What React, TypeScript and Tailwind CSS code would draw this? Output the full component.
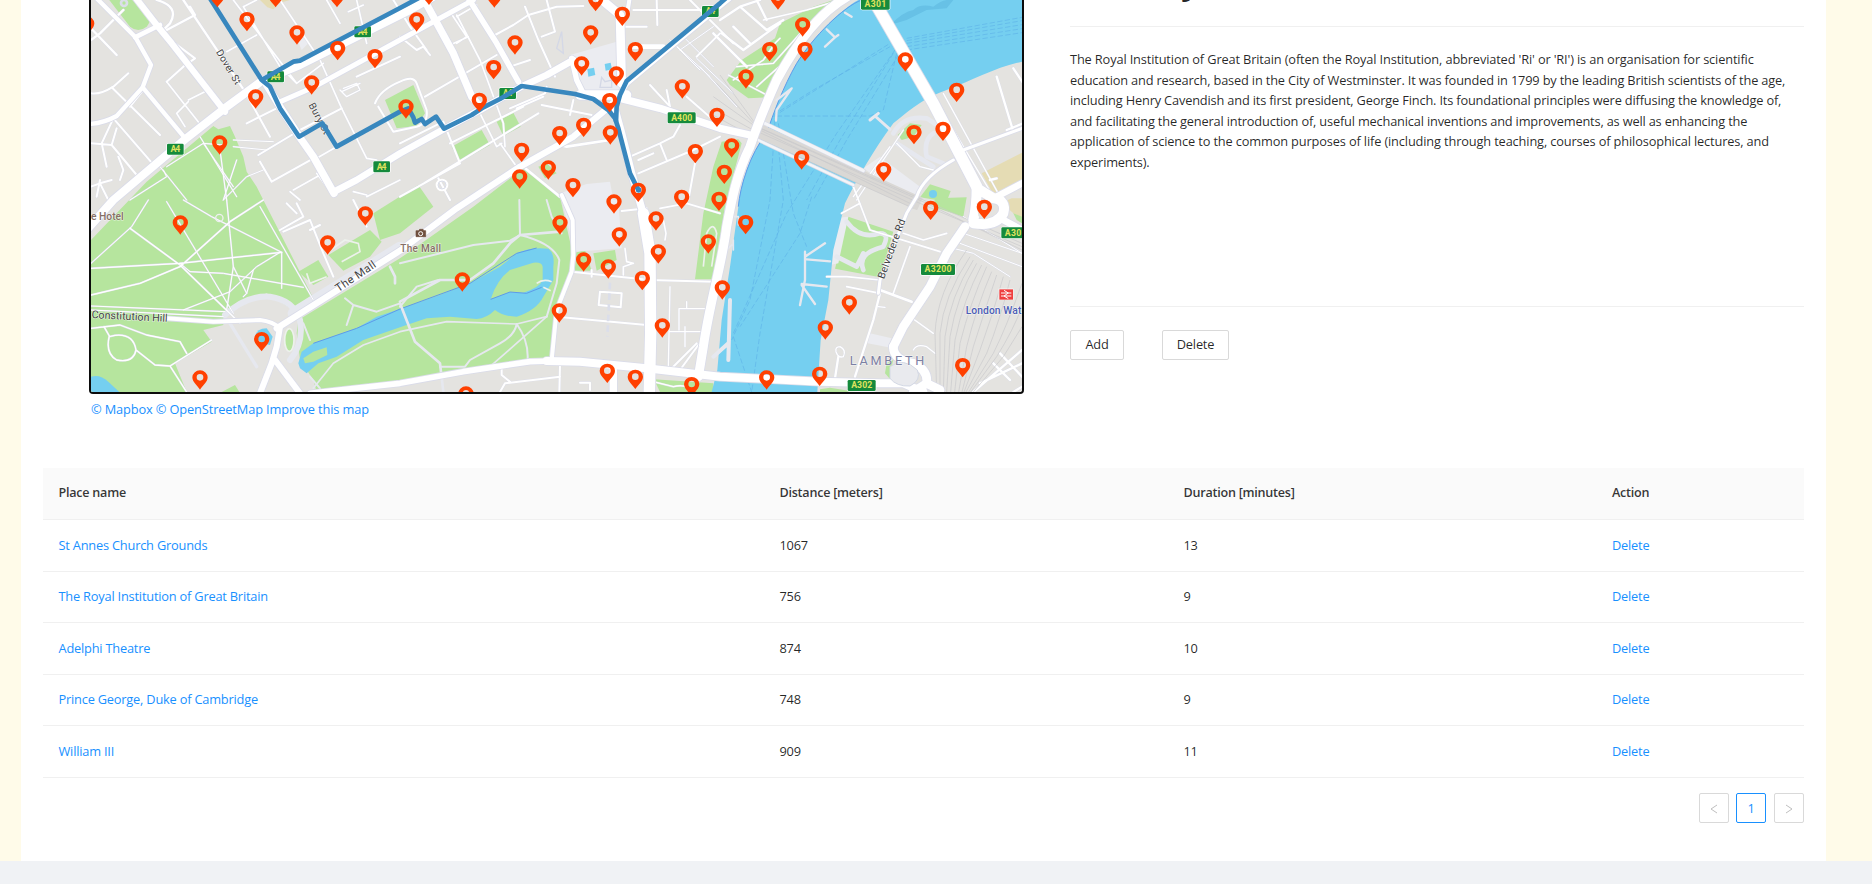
import React from "react";

type Road = [string, number];
type Pt = [number, number];

const LINK = "text-[#1890ff]";

/* ---------- map data: one unit is a third of a pixel ---------- */

const parks: string[] = [
  "M33 720L200 545L400 378L415 388L450 378L465 410L490 470L500 515L530 560L550 600L700 895L640 930L560 880L430 935L430 975L370 990L395 1025L285 1090L320 1176L33 1176Z",
  "M655 960L960 775L1180 620L1330 505L1440 590L1480 770L1475 815L1425 930L1415 1075L1200 1100L960 1140L710 1176L700 1140L660 1080L650 1000Z",
  "M80 -10L150 80Q175 100 200 80Q220 55 205 30L175 -10Z",
  "M915 300L1000 255L1035 340L1010 378L950 385Z",
  "M1115 440L1205 390L1230 435L1140 485Z",
  "M1250 365L1300 338L1322 380L1270 408Z",
  "M880 640L1015 555L1060 620L960 700L900 720Z",
  "M1375 500L1400 490L1430 520L1395 535Z",
  "M655 815L715 780L745 830L700 855Z",
  "M745 765L870 690L905 725L870 770L790 812Z",
  "M1485 758L1515 750L1535 812L1485 812Z",
  "M1540 760L1605 750L1610 780L1550 812Z",
  "M1925 425L1975 418L1985 430L1935 620L1900 838L1845 838L1870 640L1900 500Z",
  "M2290 -10L2200 20L2100 70L2085 115L1985 180L1940 240L1950 255L2005 295L2060 292L2080 245L2110 190L2170 110L2220 60L2300 -10Z",
  "M2453 405L2490 370L2525 375L2500 410L2465 420Z",
  "M2520 592L2550 553L2612 573L2600 605Z",
  "M2565 595L2660 592L2650 650L2560 620Z",
  "M2305 650L2440 695L2400 832L2265 806Z",
  "M2220 1168L2250 1163L2330 1176L2220 1176Z",
  "M425 1176L465 1155L478 1176Z",
  "M1722 1138L1900 1150L1900 1176L1740 1176Z",
  "M2420 1090L2440 1080L2430 1120L2450 1160L2415 1120Z",
  "M2800 640L2826 630L2826 670L2810 660Z",
];

const tans: string[] = [
  "M540 0L562 22L580 28L600 8L630 0Z",
  "M2705 520L2826 458L2826 545L2740 582Z",
  "M2765 608L2795 595L2826 595L2826 650L2800 640Z",
];

const plazas: string[] = [
  "M1470 165L1610 125L1625 200L1620 270L1505 275L1480 190Z",
  "M1440 580L1520 552L1590 545L1600 600L1615 600L1625 745L1485 755L1450 620Z",
  "M2350 505L2400 470L2520 560L2500 592L2430 560Z",
  "M2370 1000L2435 1015L2425 1042L2363 1030Z",
  "M2260 655L2305 650L2275 790L2250 795Z",
  "M650 115L675 108L685 130L665 150Z",
];

const waters: string[] = [
  "M2345 -5C2290 20 2200 110 2150 190C2110 260 2080 340 2060 400C2010 460 1980 560 1975 620L1950 800L1925 960L1912 1110L1895 1176L2212 1176L2222 1020L2245 900L2260 750L2295 610C2330 540 2380 450 2440 370C2500 320 2540 290 2600 270C2680 240 2750 200 2826 185L2826 -5Z",
  "M655 1090L665 1055L700 1030L830 985L890 950L960 927L1080 885L1170 850L1260 800L1310 760Q1350 740 1405 746Q1425 760 1420 800L1420 840L1390 890Q1370 930 1310 950Q1270 950 1245 930Q1220 955 1190 957L1110 950L1040 955L960 982L850 1020L770 1070L715 1090L680 1120L660 1105Z",
  "M33 1130Q60 1122 85 1145L118 1176L33 1176Z",
  "M525 1010Q530 985 560 985L578 1010L570 1035L545 1030Z",
  "M1522 207L1542 203L1546 225L1525 230Z",
  "M1574 192L1592 188L1596 208L1577 212Z",
];

const islands: string[] = [
  "M1232 898Q1250 840 1290 810L1360 788Q1385 785 1388 800L1388 840Q1380 862 1330 878L1290 876Z",
  "M670 1075L700 1055L740 1042L742 1065L700 1085L675 1090Z",
];

const lavender: Road[] = [
  ["M435 945Q500 885 570 890Q640 900 660 960Q672 1030 630 1080", 18],
  ["M450 970L530 1100", 10],
  ["M640 940L960 742", 34],
  ["M960 905L1080 840L1170 840L1240 790L1290 730L1320 705L1440 695", 8],
  ["M960 790L1180 735L1290 722L1320 705L1318 600", 6],
  ["M1320 705Q1420 730 1438 780L1430 850L1400 950", 6],
  ["M960 910L1005 1025L1080 1090L1090 1176", 8],
  ["M700 1165L760 1090L850 1035L960 995L1100 965L1310 972L1400 950", 5],
  ["M1310 972Q1345 1020 1343 1075M1310 972Q1305 1005 1260 1030L1170 1080L1155 1100L1080 1100", 6],
  ["M1400 950L1230 1100", 5],
  ["M795 895L820 915L890 935L960 910M820 915L805 960L800 975", 6],
  ["M1075 840L1010 860L960 920", 6],
  ["M1400 600L1415 650L1445 700", 6],
  ["M930 800L945 830L945 850", 8],
  ["M2300 665Q2340 720 2400 700Q2430 700 2410 740Q2330 760 2350 810M2270 770L2330 800L2350 760", 14],
  ["M690 1130L720 1165", 6],
  ["M670 970L690 1020", 6],
  ["M2440 400Q2470 345 2540 355Q2580 380 2600 400M2560 400Q2530 420 2540 470L2590 490M2450 430L2560 500", 14],
];

const minor: Road[] = [
  ["M33 85L110 165M33 120L60 100L130 30M230 0Q300 20 270 70L245 95", 7],
  ["M260 90L345 45M310 0L495 275M345 45L330 20", 7],
  ["M33 280Q60 285 100 260L145 220M95 262L240 405M150 320L190 270M260 245L310 200L345 175L285 130", 6],
  ["M260 245L370 385M325 300L385 270M290 340L325 305M290 340L315 380", 5],
  ["M100 355L230 505M100 355L65 430L80 500M33 430L95 435L170 525M95 435L110 385M60 540L50 590", 6],
  ["M33 560L60 550L95 540M60 550L85 600M115 470L130 510L120 540", 6],
  ["M460 0L650 250M440 155L530 105M490 20L600 200L650 250L730 190M490 20L530 0", 5],
  ["M495 275L570 410M500 370L600 320M535 465L660 390L785 325M540 485L575 545L710 470", 6],
  ["M740 0L780 70M830 0L860 130M805 35L850 15M600 0L720 180L785 325L860 475L890 480", 5],
  ["M785 275L840 250M780 270L800 290L840 270L830 250L790 265", 4],
  ["M630 575L660 600M640 570L720 525M820 575L860 585M710 475L770 440M860 590L960 540M710 520L740 560", 5],
  ["M885 310Q900 270 960 245Q1000 225 1010 250L1040 330Q1045 370 1010 380L940 395L895 320", 6],
  ["M830 230L960 170M940 0L990 80L1040 150M960 110L1010 150L1030 140L1050 165M1035 290L1250 165", 6],
  ["M1130 50L1190 15M1110 35L1160 110L1130 130M1110 135L1165 110M1130 45L1200 180L1270 370L1275 440M1170 280L1250 440L1265 430", 5],
  ["M1245 105L1300 75L1345 45L1430 20L1510 18M1335 20L1375 120L1425 230M1400 0L1425 95L1385 110", 6],
  ["M1290 325L1395 280L1400 260M1310 325L1390 290M1290 200L1350 180M1385 315L1535 345M1480 300L1470 345", 6],
  ["M960 430L1090 365L1140 490M1035 548L1375 340M1110 430L1330 320M1075 535L1110 600M1140 490L960 590", 6],
  ["M1260 430L1310 500", 5],
  ["M1330 500L1440 590M1440 435L1460 440L1590 420", 8],
  ["M1730 0L1732 75M1660 30L1880 30M1620 80L1700 80M1830 0L1960 130M1850 170L1920 100", 6],
  ["M1660 140L1750 140", 14],
  ["M1650 470L1740 430L1780 410L1800 375M1740 430L1760 480M1675 520L1840 450L1920 410M1675 480L1720 460", 6],
  ["M1845 490L1825 600M1820 290L1900 360M1760 270L1770 320M1710 255L1770 320", 6],
  ["M1790 140L1860 210M1770 120L1890 230M1850 175L1960 280M1810 110L1900 200M1860 200L1970 320M1800 150L1900 80", 3],
  ["M1920 60L1980 20L2040 0M1980 20L2060 90L2110 60M1900 100L2000 200M1925 100L1990 150L2100 70M2010 130L1960 80M2030 0L2060 60", 7],
  ["M1960 240L2050 180L2085 130L2100 115M1970 200L2080 190L2170 90M1945 225L2060 285M2030 260L2120 180M2050 60L2180 30L2280 0", 4],
  ["M1485 755L1480 815M1475 815L1710 840L1900 845M1430 950L1700 975M1625 633L1700 625M1560 875L1625 880L1622 922L1556 915L1560 875M1535 810L1535 830", 6],
  ["M1740 625L1820 610L1920 640M1750 660L1758 700L1755 720M1635 745L1640 785L1660 790M1630 825L1630 800L1660 790", 5],
  ["M1797 990L1797 926L1875 926M1820 905L1820 925M1770 995L1870 995M1770 860L1765 1100M1815 980L1815 1040", 4],
  ["M1770 1110L1850 1030M1800 1110L1855 1035M1500 1148L1530 1148L1530 1170M1440 1095L1438 1176M1260 1176L1275 1150L1440 1130M1265 1100L1265 1125L1290 1145", 6],
  ["M33 805L300 790L605 757M33 885L180 850L300 800L450 665L550 600M150 685L300 795L480 970", 4],
  ["M260 605L460 940M310 600L395 650L605 757M440 600L450 700L460 800L440 930M605 757L605 865M300 790L330 815L430 820L670 862M460 800L500 880M33 790L155 680L205 600", 3],
  ["M33 918L435 935M33 930L430 950M310 930L450 875L530 800L600 757M540 620L700 900M520 810L500 880L490 890", 3],
  ["M33 985L120 975L200 1005L300 1025L320 1060M72 980L88 1008Q75 1060 110 1080Q160 1090 168 1050Q160 1000 105 1006L88 1010M168 1050L225 1095L270 1098L395 1020M270 1098L320 1176", 4],
  ["M260 500L370 430L430 435M360 410L470 590M420 450L440 600M370 430L460 560M470 480L430 600M240 500L320 600M150 600L260 530L250 510M430 600L500 530L550 510", 3],
  ["M460 420L580 425M460 440L560 450", 3],
  ["M600 690L670 650L650 610M610 695L690 660L730 760L760 830M690 690L720 675M620 610L650 640M820 600L860 680", 6],
  ["M2285 640L2340 610M2320 560L2370 690L2500 730L2580 755M2240 830L2300 830L2400 840M2300 860L2400 880M2490 740L2440 880M2470 700L2530 720L2600 700", 5],
  ["M2400 880L2380 960L2325 1130M2265 1135L2275 1070", 7],
  ["M2280 1040Q2265 1040 2268 1055Q2275 1075 2290 1070Q2300 1050 2280 1040M2490 950L2560 1000M2500 1050Q2510 1030 2540 1040L2565 1060M2395 920L2415 922", 4],
  ["M2400 870L2495 905", 8],
  ["M2750 230L2800 395M2830 370L2780 390M2800 205L2830 250M2730 540L2750 535", 7],
  ["M2560 285L2650 440L2740 590M2590 280L2760 590M2450 430L2520 500L2560 510M2470 390L2330 600M2430 440L2320 590", 4],
  ["M2680 1176L2826 1050M2700 1150L2826 1090M2760 1060L2826 1130M2740 1090L2790 1140M2800 1176L2826 1160", 7],
  ["M2650 700L2826 760M2640 730L2826 800M2650 650L2826 760M2600 740L2680 760L2790 830", 3],
  ["M1700 1140L1780 1160Q1820 1150 1840 1176", 4],
];

const major: Road[] = [
  ["M40 -15L165 110L213 195L188 262L110 348Q70 370 25 372", 13],
  ["M165 112L240 75", 14],
  ["M168 -5L230 75L275 130L435 335", 19],
  ["M188 262L318 418", 13],
  ["M20 690L100 600L315 418L430 328L545 243", 24],
  ["M545 243L660 195L800 125L980 35L1060 -10", 24],
  ["M590 310L700 262L960 120L1180 0", 15],
  ["M560 255L600 320L665 420L700 470L762 580", 22],
  ["M762 575L830 540L960 460L1090 388L1200 330L1320 262L1400 225L1480 180", 20],
  ["M1030 -5L1120 160L1175 290L1200 320", 22],
  ["M1165 -5L1250 130L1315 245", 17],
  ["M1475 175L1490 240L1510 280", 16],
  ["M1500 285L1640 285", 28],
  ["M1560 -5L1620 45L1625 250", 26],
  ["M1648 0L1640 50", 12],
  ["M1610 300L1640 250L1760 150L1960 -15", 16],
  ["M1600 290L1740 325L1920 385L2010 405", 22],
  ["M590 985L960 752L1130 625L1320 500L1480 410L1600 310", 19],
  ["M1600 310L1625 400L1655 520L1695 660L1708 740L1705 1176", 22],
  ["M1690 640L1710 760L1712 1000L1708 1176", 34],
  ["M260 955L400 965L540 960Q580 965 600 985", 12],
  ["M600 980L590 1040L575 1090L540 1180M585 1080L660 1180", 18],
  ["M1445 585L1478 660L1480 765L1475 815L1430 930L1415 1080", 12],
  ["M690 1180L960 1150L1150 1115L1350 1085L1420 1083", 17],
  ["M1400 1083L1500 1085L1700 1105L1920 1130L2220 1145L2400 1150L2470 1150L2530 1176", 24],
  ["M1600 1100L1600 1176", 22],
  ["M2320 -20C2220 30 2150 130 2090 240C2050 330 2030 380 2010 440C1970 520 1955 600 1940 680C1925 800 1890 900 1870 1040L1855 1130", 27],
  ["M2392 20L2560 310L2690 560", 34],
  ["M2690 560Q2690 620 2680 660M2700 570L2740 595Q2780 600 2770 640Q2750 680 2680 670", 30],
  ["M2740 595L2826 550M2770 660L2826 690", 20],
  ["M2650 450L2826 385M2620 480Q2530 530 2510 590L2480 640L2400 840L2395 880", 9],
  ["M2655 680L2600 760L2550 860L2470 980L2440 1040", 26],
  ["M2440 1040Q2440 1080 2500 1090Q2545 1110 2540 1150L2500 1176M2540 1150L2580 1170", 26],
];

const bridges: Road[] = [
  ["M2050 368L2350 512", 9],
  ["M2030 418L2320 555", 7],
];

const rails: string[] = [
  "M1900 325L2010 385L2520 610L2826 740",
  "M1900 290L2020 375L2530 600L2826 730",
  "M1910 250L2030 380L2540 610L2826 750",
  "M1920 225L2040 390L2500 615",
  "M1890 340L2000 400L2500 625",
  "M2570 1176L2565 1000Q2570 880 2660 750",
  "M2580 1176L2580 1000Q2590 890 2670 770",
  "M2590 1176L2595 1010Q2610 890 2680 780",
  "M2600 1176L2610 1010Q2630 890 2690 790",
  "M2612 1176L2625 1020Q2650 900 2705 795",
  "M2624 1176L2640 1030Q2670 910 2720 800",
  "M2636 1176L2660 1040Q2690 920 2735 815",
  "M2646 1176L2680 1040Q2715 930 2750 825",
  "M2652 1176L2700 1050Q2740 940 2770 830",
  "M2658 1176L2720 1060Q2760 960 2790 840",
  "M2666 1176L2740 1060Q2780 980 2826 850",
  "M2672 1176L2750 1070Q2800 990 2826 920",
  "M2680 1176L2770 1070L2826 980",
];

const ferries = [
  "M2080 345L2200 270L2430 140",
  "M2090 348L2370 348L2410 330L2450 160",
  "M2080 350L2430 130",
  "M2440 160L2280 420L2180 600",
  "M2455 165L2300 420L2200 600",
  "M2445 150L2270 400L2120 640L1960 1000",
  "M2480 115L2826 52M2480 122L2826 62M2480 130L2826 74M2480 140L2826 86M2480 150L2826 98",
  "M2085 360L2070 600L2010 900L1955 1020",
  "M2095 370L2140 640L2180 740",
  "M2090 380L2110 600L2040 1000L2015 1176",
  "M2195 590L2160 700L1980 980M1960 1010L2015 1176",
];

const piers: Road[] = [
  ["M2240 88L2265 112L2235 140M2265 112L2275 105M2295 38L2315 50", 7],
  ["M2088 362L2090 330L2135 265L2090 300", 7],
  ["M2370 360L2395 340M2385 348L2430 388", 9],
  ["M2175 755L2175 840L2160 915M2175 770L2235 730M2180 778L2250 784M2165 852L2240 860M2165 855L2205 912", 7],
  ["M1950 900L1945 1080M1900 1070L1945 1030", 12],
  ["M1955 650L1975 650L1975 675M1960 720L1960 750M1955 735L1945 745", 5],
];

const route = [
  "M390 -5L545 240L570 260L600 325L657 410L727 370L770 440L960 335L985 325L1000 352L1005 368L1025 357L1035 372L1068 350L1092 386L1175 345L1210 322L1260 297L1325 258L1485 282L1540 297L1585 330L1605 355L1615 385L1650 520L1676 572",
  "M545 240L640 185L660 182L960 24L1020 -8",
  "M1608 365L1610 320L1620 285L1640 243L1920 10L1945 -12",
];

const pins: Pt[] = [
  [412, -15], [501, 57], [587, -15], [651, 97], [771, -15], [773, 144], [885, 168], [695, 247], [527, 289], [419, 427], [20, 70],
  [1010, 58], [1047, -22], [1243, -14], [1305, 127], [1241, 201], [1198, 299], [978, 319], [1547, -3], [1627, 41], [1532, 97],
  [1666, 147], [1505, 190], [1609, 220], [1589, 300], [1807, 259], [1911, 344], [1511, 374], [1439, 399], [1591, 397], [1325, 449],
  [1319, 529], [1405, 502], [1479, 555], [1846, 453], [1602, 604], [1675, 569], [1805, 590], [1917, 596], [2094, -8], [2168, 73],
  [2069, 147], [2175, 147], [1998, 229], [2476, 178], [2630, 269], [2502, 396], [2589, 386], [2411, 508], [2165, 472], [1955, 436],
  [1933, 515], [301, 667], [856, 640], [743, 727], [545, 1017], [360, 1132], [1440, 667], [1147, 838], [1438, 931], [1511, 778],
  [1585, 799], [1618, 703], [1728, 655], [1735, 754], [1687, 834], [1747, 976], [1885, 724], [1927, 862], [1582, 1112],
  [1666, 1130], [1835, 1152], [1158, 1180], [1997, 666], [2552, 623], [2713, 620], [2308, 907], [2236, 982], [2648, 1095],
  [2060, 1132], [2219, 1121],
];

const shields: [number, number, number, string][] = [
  [286, 447, 50, "A4"], [905, 500, 50, "A4"], [587, 230, 50, "A4"], [848, 95, 50, "A4"], [1283, 280, 50, "A4"], [1891, 34, 50, "A4"],
  [1805, 353, 84, "A400"], [2386, 12, 86, "A301"], [2574, 808, 102, "A3200"], [2807, 698, 86, "A301"], [2345, 1156, 84, "A302"],
];

function Areas({ shapes, fill }: { shapes: string[]; fill: string }) {
  return <>{shapes.map((d) => <path key={d} d={d} fill={fill} />)}</>;
}

function Roads({ roads, color, casing, edge = 4 }: { roads: Road[]; color: string; casing?: string; edge?: number }) {
  return (
    <g fill="none" strokeLinejoin="round" strokeLinecap="round">
      {casing && roads.map(([d, w]) => <path key={d} d={d} stroke={casing} strokeWidth={w + edge} />)}
      {roads.map(([d, w]) => <path key={d} d={d} stroke={color} strokeWidth={w} />)}
    </g>
  );
}

function MapLabels() {
  return (
    <g fontFamily='"Roboto", sans-serif' fontSize="30" fontWeight="400" fill="#3f3f42" textAnchor="middle" stroke="#fff" strokeOpacity=".7" strokeWidth="3" paintOrder="stroke">
      <text transform="translate(437 206) rotate(59)" textLength="116">Dover St</text>
      <text transform="translate(709 360) rotate(62)" textLength="102">Bury St</text>
      <text transform="translate(833 838) rotate(-34)" fontSize="34" textLength="138">The Mall</text>
      <text transform="translate(148 960) rotate(3)" fontSize="32" textLength="228">Constitution Hill</text>
      <text transform="translate(2444 750) rotate(-70)" fontSize="31" textLength="188">Belvedere Rd</text>
      <text x="33" y="659" textAnchor="start" fill="#866f66" fontSize="31" fontWeight="500" textLength="98">e Hotel</text>
      <text x="1022" y="755" fill="#866f66" fontWeight="500" textLength="122">The Mall</text>
      <text x="2657" y="941" textAnchor="start" fill="#4c5db5" fontSize="31" fontWeight="500" textLength="167">London Wat</text>
      <text x="2421" y="1094" fill="#7c80a3" fontSize="38" textLength="224">LAMBETH</text>
    </g>
  );
}

function CityMap() {
  return (
    <svg viewBox="33 0 2793 1176" className="block h-[392px] w-[931px]" role="presentation">
      <rect x="0" y="0" width="2830" height="1180" fill="#e4e3e0" />
      <Areas shapes={parks} fill="#b6e59e" />
      <Areas shapes={tans} fill="#e5dcb4" />
      <Areas shapes={plazas} fill="#ebecf1" />
      <path d="M440 965Q500 905 570 905Q630 915 645 960L630 1060L560 1110L470 1000Z" fill="#e4e3e0" />
      <Areas shapes={waters} fill="#75cff0" />
      <Areas shapes={islands} fill="#b6e59e" />
      <path d="M2430 75Q2470 35 2500 30Q2520 10 2560 20Q2590 -5 2620 0L2600 25L2540 30L2480 60Z" fill="#67c1e6" />
      <path d="M2345 0C2290 20 2200 110 2150 190C2110 260 2080 340 2060 400C2010 460 1980 560 1975 620M700 1030L830 985L960 927L1170 850L1310 760L1370 744M1232 898L1290 876L1340 880L1385 862" fill="none" stroke="#5d9bea" strokeWidth="3" />
      <g fill="none" stroke="#5fb3e8" strokeWidth="2" strokeDasharray="16 7">
        {ferries.map((d) => <path key={d} d={d} />)}
      </g>
      <Roads roads={lavender} color="#e6e8ef" />
      <Roads roads={minor} color="#ffffff" casing="#dadce8" edge={2} />
      <Roads roads={piers} color="#e6e8ef" />
      <path d="M2020 385L2520 612" stroke="#dad8d5" strokeWidth="42" fill="none" />
      <g fill="none" stroke="#c9c8cc" strokeWidth="2">
        {rails.map((d) => <path key={d} d={d} />)}
      </g>
      <Roads roads={bridges} color="#f4f5f8" casing="#d8dbe8" />
      <Roads roads={major} color="#ffffff" casing="#dadce9" edge={5} />
      <path d="M2690 610Q2712 590 2738 612L2728 650Q2712 668 2695 648Z" fill="#e4e3e0" />
      <path d="M2430 1100Q2470 1070 2512 1110Q2525 1140 2490 1158Q2450 1160 2430 1135Z" fill="#e9eaee" stroke="#d3d8e4" strokeWidth="3" />
      <g fill="none" stroke="#dbdeea" strokeWidth="8">
        <circle cx="132" cy="9" r="9" />
        <circle cx="418" cy="654" r="11" stroke="#eef1f0" strokeWidth="4" />
        <circle cx="1086" cy="555" r="15" stroke="#fff" />
        <circle cx="1086" cy="555" r="12" stroke="#dbdeea" strokeWidth="3" />
        <path d="M1590 848L1582 1010" strokeDasharray="20 12" />
      </g>
      <path d="M1445 95L1450 160L1430 145ZM1565 232L1575 245L1595 240L1595 262L1560 262Z" fill="none" stroke="#d4d8e6" strokeWidth="4" />
      <circle cx="2559" cy="582" r="12" fill="#75cff0" />
      <g fill="none" stroke="#edf1ec" strokeWidth="5">
        <ellipse cx="628" cy="1020" rx="14" ry="34" fill="#b6e59e" />
        <path d="M1370 850Q1390 835 1415 845M1390 862L1412 872" />
        <path d="M1870 800L1880 700Q1900 660 1910 700L1895 800" />
        <path d="M745 755L795 720L835 730L840 755L785 785M680 820L690 850L740 830" />
      </g>

      {shields.map(([x, y, w, label]) => (
        <g key={`${x}-${y}`}>
          <rect x={x - w / 2 - 2} y={y - 18} width={w + 4} height="37" rx="6" fill="#fff" />
          <rect x={x - w / 2} y={y - 16} width={w} height="33" rx="4" fill="#158a3c" />
          <text x={x} y={y + 9} textAnchor="middle" fontFamily='"Roboto", sans-serif' fontSize="26" fontWeight="700" fill="#e0e35f" textLength={w - 21}>{label}</text>
        </g>
      ))}
      <MapLabels />
      <g>
        <path d="M1009 692h7l3-4h10l3 4h5v18h-29v-18z" fill="#6f4f3e" stroke="#6f4f3e" strokeWidth="2" strokeLinejoin="round" />
        <circle cx="1022" cy="701" r="6" fill="none" stroke="#fff" strokeWidth="3" />
        <rect x="2756" y="866" width="44" height="34" fill="#fff" />
        <rect x="2758" y="868" width="41" height="31" fill="#ef3f3f" />
        <path d="M2763 879H2794M2763 888H2794M2772 871L2785 879L2772 888L2785 896" fill="none" stroke="#fff" strokeWidth="3" />
      </g>

      <g fill="none" stroke="#3887be" strokeWidth="14" strokeLinejoin="round">
        {route.map((d) => <path key={d} d={d} />)}
      </g>
      <circle cx="1676" cy="570" r="8" fill="#3887be" />
      {pins.map(([x, y]) => (
        <path
          key={`${x}-${y}`}
          transform={`translate(${x} ${y})`}
          d="M0 37C-7 26 -23 14 -23 0A23 21 0 0 1 23 0C23 14 7 26 0 37ZM0 -10A10 10 0 1 0 0 10A10 10 0 1 0 0 -10Z"
          fill="#ff4000"
          fillRule="evenodd"
        />
      ))}
    </svg>
  );
}

/* ---------- page ---------- */

const description: [string, string][] = [
  ["The Royal Institution of Great Britain (often the Royal Institution, abbreviated 'Ri' or 'RI') is an organisation for scientific", "tracking-[-0.143px]"],
  ["education and research, based in the City of Westminster. It was founded in 1799 by the leading British scientists of the age,", "tracking-[-0.168px]"],
  ["including Henry Cavendish and its first president, George Finch. Its foundational principles were diffusing the knowledge of,", "tracking-[-0.175px]"],
  ["and facilitating the general introduction of, useful mechanical inventions and improvements, as well as enhancing the", "tracking-[-0.18px]"],
  ["application of science to the common purposes of life (including through teaching, courses of philosophical lectures, and", "tracking-[-0.145px]"],
  ["experiments).", "tracking-[-0.2px]"],
];

const places = [
  { name: "St Annes Church Grounds", distance: 1067, duration: 13 },
  { name: "The Royal Institution of Great Britain", distance: 756, duration: 9 },
  { name: "Adelphi Theatre", distance: 874, duration: 10 },
  { name: "Prince George, Duke of Cambridge", distance: 748, duration: 9 },
  { name: "William III", distance: 909, duration: 11 },
];

const columns = "grid grid-cols-[721px_404px_429px_207px]";

function PlaceTable() {
  return (
    <div className="w-[1761px]">
      <div className={`${columns} h-[52px] items-center border-b border-[#f0f0f0] bg-[#fafafa] text-[12.6px] font-semibold tracking-[-0.25px] text-black/80`}>
        <div className="pl-[15.5px]">Place name</div>
        <div className="pl-[15.5px]">Distance [meters]</div>
        <div className="pl-[15.5px]">Duration [minutes]</div>
        <div className="pl-[15px]">Action</div>
      </div>
      {places.map((p) => (
        <div key={p.name} className={`${columns} h-[51.6px] items-center border-b border-[#f0f0f0] pb-px`}>
          <a className={`pl-[15.5px] tracking-[-0.2px] ${LINK}`}>{p.name}</a>
          <div className="pl-[15.5px]">{p.distance}</div>
          <div className="pl-[15.5px]">{p.duration}</div>
          <a className={`pl-[15px] ${LINK}`}>Delete</a>
        </div>
      ))}
    </div>
  );
}

function Arrow({ flip }: { flip?: boolean }) {
  return (
    <svg viewBox="0 0 10 10" className={flip ? "mt-[3px] size-[10px] -scale-x-100" : "mt-[3px] size-[10px]"} fill="none" stroke="#bfbfbf" strokeWidth="1">
      <path d="M8 1L2 5L8 9" />
    </svg>
  );
}

export default function App() {
  return (
    <div className="flex h-[884px] w-[1872px] flex-col overflow-hidden bg-[#f0f2f5] font-['Open_Sans',sans-serif] text-[12.8px] leading-[20.6px] tracking-[-0.2px] text-black/85">
      <div className="flex h-[861px] bg-[#fffbe9] pr-[46px] pl-[21px]">
        <main className="flex w-[1805px] flex-col bg-white pl-[22px]">
          <div className="flex h-[468px]">
            <section className="ml-[46px] w-[935px]">
              <div className="overflow-hidden rounded-b-[4px] border-2 border-t-0 border-[#0c0c0c]">
                <CityMap />
              </div>
              <p className={`mt-[5px] pl-[2px] tracking-[-0.13px] ${LINK}`}>© Mapbox © OpenStreetMap Improve this map</p>
            </section>
            <section className="ml-[46px] w-[734px]">
              <div className="flex h-[27px] items-end border-b border-[#f0f0f0]">
                <h1 className="mb-[27px] whitespace-nowrap text-[34.5px] leading-[36px] font-semibold tracking-[-0.3px]">The Royal Institution of Great Britain</h1>
              </div>
              <div className="h-[280px] border-b border-[#f0f0f0] pt-[22px]">
                {description.map(([line, tracking]) => (
                  <span key={line} className={`block whitespace-nowrap ${tracking}`}>{line}</span>
                ))}
              </div>
              <div className="mt-[23px] flex gap-[38px]">
                <button className="h-[30px] w-[54px] rounded-[2px] border border-[#d9d9d9] pb-px">Add</button>
                <button className="h-[30px] w-[67px] rounded-[2px] border border-[#d9d9d9] pb-px">Delete</button>
              </div>
            </section>
          </div>
          <PlaceTable />
          <div className="mt-[15px] flex w-[1761px] justify-end">
            <button className="flex size-[30px] items-center justify-center rounded-[2px] border border-[#d9d9d9]"><Arrow /></button>
            <button className="mr-[8px] ml-[7px] size-[30px] rounded-[2px] border border-[#1890ff] text-[#1890ff]">1</button>
            <button className="flex size-[30px] items-center justify-center rounded-[2px] border border-[#d9d9d9]"><Arrow flip /></button>
          </div>
        </main>
      </div>
    </div>
  );
}
